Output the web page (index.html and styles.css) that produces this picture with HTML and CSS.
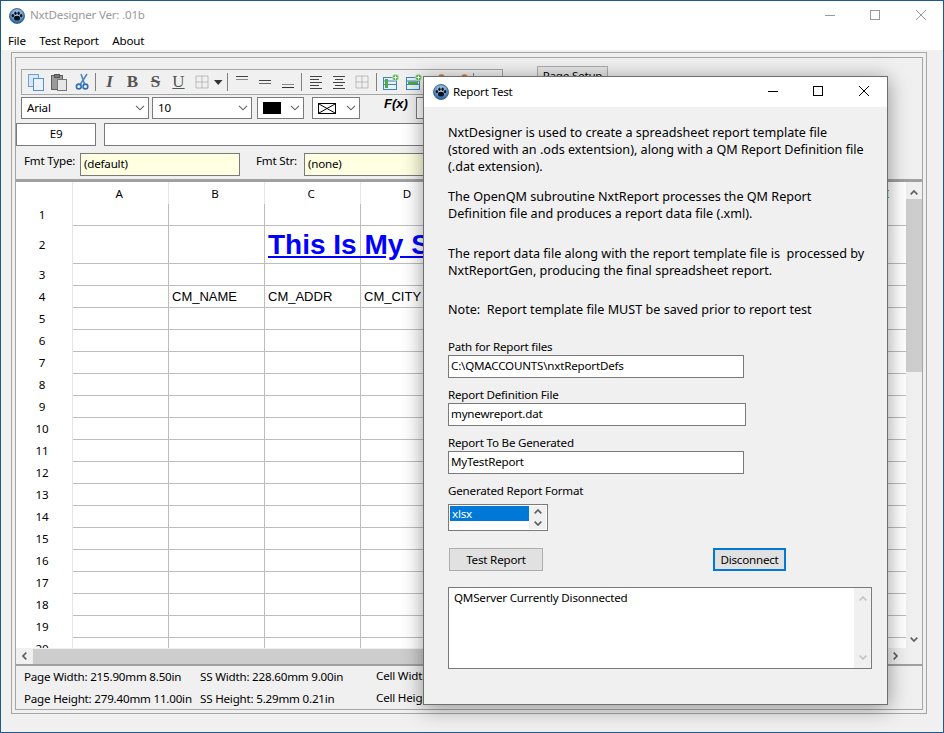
FILE: index.html
```html
<!DOCTYPE html>
<html>
<head>
    <title>NxtDesigner Ver: .01b</title>
    <link rel="stylesheet" href="styles.css">
</head>
<body>
<svg class="defs" width="0" height="0">
    <defs>
        <radialGradient id="ball" cx="50%" cy="35%" r="65%">
            <stop offset="0" stop-color="#c9dcf0"/>
            <stop offset="0.55" stop-color="#6f9fce"/>
            <stop offset="1" stop-color="#1f5a96"/>
        </radialGradient>
        <symbol id="paw" viewBox="0 0 16 16">
            <circle cx="8" cy="8" r="7.5" fill="url(#ball)" stroke="#35577d" stroke-width="0.8"/>
            <ellipse cx="8" cy="10.2" rx="3" ry="2.4" fill="#0b0f18"/>
            <ellipse cx="3.9" cy="7.6" rx="1.2" ry="1.6" fill="#0b0f18"/>
            <ellipse cx="6.5" cy="5.2" rx="1.2" ry="1.7" fill="#0b0f18"/>
            <ellipse cx="9.6" cy="5.2" rx="1.2" ry="1.7" fill="#0b0f18"/>
            <ellipse cx="12.1" cy="7.6" rx="1.2" ry="1.6" fill="#0b0f18"/>
        </symbol>
        <symbol id="chev" viewBox="0 0 10 6">
            <path d="M1 .8l4 4 4-4" fill="none" stroke="#606060" stroke-width="1.1"/>
        </symbol>
        <symbol id="dotted" viewBox="0 0 14 14">
            <path d="M1.5 1h11M1.5 7h11M1.5 13h11M1 1.5v11M7 1.5v11M13 1.5v11" fill="none" stroke="#8a8a8a" stroke-dasharray="1 1"/>
        </symbol>
        <symbol id="sheet" viewBox="0 0 16 16">
            <rect x="0.5" y="3.5" width="13" height="12" fill="#e6f1fa" stroke="#3f86b8"/>
            <path d="M1 7h12M1 10.5h12" stroke="#3f86b8"/>
        </symbol>
    </defs>
</svg>

<div class="window">
    <div class="titlebar">
        <svg class="title-icon"><use href="#paw"/></svg>
        <span class="title-text">NxtDesigner Ver: .01b</span>
        <div class="win-controls">
            <svg width="46" height="30"><path d="M18 14.5h10" stroke="#999"/></svg>
            <svg width="46" height="30"><rect x="17.5" y="9.5" width="9" height="9" fill="none" stroke="#999"/></svg>
            <svg width="46" height="30"><path d="M17 9l10 10M27 9L17 19" stroke="#999"/></svg>
        </div>
    </div>
    <div class="menubar">
        <span>File</span>
        <span>Test Report</span>
        <span>About</span>
    </div>

    <div class="workspace">
        <div class="outer-frame">
            <div class="inner-frame">
                <div class="tool-row row-one">
                    <div class="toolbar">
                        <span class="tb"><svg width="18" height="18"><rect x="1.5" y="1.5" width="10" height="12" fill="#dbe8f8" stroke="#6d9edb"/><rect x="6.5" y="5.5" width="10" height="12" fill="#eaf2fc" stroke="#5a8fd6"/></svg></span>
                        <span class="tb"><svg width="18" height="18"><rect x="1.5" y="2.5" width="11" height="14" fill="#9a9a9a" stroke="#5e5e5e"/><rect x="4.5" y="1.5" width="5" height="3" fill="#777" stroke="#555"/><rect x="7.5" y="6.5" width="9" height="11" fill="#e6e6e6" stroke="#777"/></svg></span>
                        <span class="tb"><svg width="14" height="18"><path d="M12 1L5.5 11M6 1l3.5 10" stroke="#4f86c4" stroke-width="1.6" fill="none"/><circle cx="3.8" cy="13.5" r="2.4" fill="none" stroke="#2f6fb8" stroke-width="1.6"/><circle cx="10.4" cy="13.5" r="2.4" fill="none" stroke="#2f6fb8" stroke-width="1.6"/></svg></span>
                        <span class="tb-sep"></span>
                        <span class="tb glyph glyph-i">I</span>
                        <span class="tb glyph glyph-b">B</span>
                        <span class="tb glyph glyph-s">S</span>
                        <span class="tb glyph glyph-u">U</span>
                        <span class="tb"><svg width="14" height="14"><use href="#dotted"/></svg></span>
                        <span class="tb-drop"><svg width="9" height="5"><path d="M0 0h8.5L4.2 5z" fill="#333"/></svg></span>
                        <span class="tb-sep sep-wide"></span>
                        <span class="tb"><svg width="14" height="18"><path d="M1 3.5h12" stroke="#444"/><path d="M1 6.5h12" stroke="#888"/></svg></span>
                        <span class="tb"><svg width="14" height="18"><path d="M1 7.5h12" stroke="#444"/><path d="M1 10.5h12" stroke="#666"/></svg></span>
                        <span class="tb"><svg width="14" height="18"><path d="M1 11.5h12" stroke="#888"/><path d="M1 14.5h12" stroke="#333"/></svg></span>
                        <span class="tb-sep"></span>
                        <span class="tb"><svg width="14" height="14"><path d="M1 1.5h12M1 4.5h9M1 7.5h12M1 10.5h9M1 13.5h12" stroke="#444"/></svg></span>
                        <span class="tb"><svg width="14" height="14"><path d="M1 1.5h12M3 4.5h8M1 7.5h12M3 10.5h8M1 13.5h12" stroke="#444"/></svg></span>
                        <span class="tb"><svg width="14" height="14"><use href="#dotted"/></svg></span>
                        <span class="tb-sep sep-wide"></span>
                        <span class="tb"><svg width="16" height="16"><use href="#sheet"/><rect x="2" y="5" width="3" height="9" fill="#4fa84a"/><circle cx="12.5" cy="3.5" r="3.2" fill="#55b24f" stroke="#e8f5e6" stroke-width="0.6"/><path d="M10.5 3.5h4M12.5 1.5v4" stroke="#fff"/></svg></span>
                        <span class="tb"><svg width="16" height="16"><use href="#sheet"/><rect x="2" y="7.5" width="10" height="3" fill="#4fa84a"/><circle cx="12.5" cy="3.5" r="3.2" fill="#55b24f" stroke="#e8f5e6" stroke-width="0.6"/><path d="M10.5 3.5h4M12.5 1.5v4" stroke="#fff"/></svg></span>
                        <span class="tb"><svg width="16" height="16"><use href="#sheet"/><circle cx="12.5" cy="3.5" r="3.2" fill="#d9782f"/></svg></span>
                        <span class="tb"><svg width="16" height="16"><use href="#sheet"/><circle cx="12.5" cy="3.5" r="3.2" fill="#d9782f"/></svg></span>
                        <span class="tb-sep"></span>
                    </div>
                    <div class="page-setup">Page Setup</div>
                </div>

                <div class="tool-row row-two">
                    <div class="combo combo-font"><span class="combo-text">Arial</span><svg class="chev"><use href="#chev"/></svg></div>
                    <div class="combo combo-size"><span class="combo-text">10</span><svg class="chev"><use href="#chev"/></svg></div>
                    <div class="combo combo-color"><span class="swatch"></span><svg class="chev"><use href="#chev"/></svg></div>
                    <div class="combo combo-border"><svg width="18" height="11"><rect x="0.5" y="0.5" width="17" height="10" fill="#fff" stroke="#000"/><path d="M1 1l16 9M17 1L1 10" stroke="#000"/></svg><svg class="chev"><use href="#chev"/></svg></div>
                    <span class="fx">F(x)</span>
                    <div class="combo combo-fx"></div>
                </div>

                <div class="tool-row row-three">
                    <div class="cell-ref">E9</div>
                    <div class="formula"></div>
                </div>

                <div class="tool-row row-four">
                    <span class="fmt-label">Fmt Type:</span>
                    <div class="fmt-field fmt-type">(default)</div>
                    <span class="fmt-label fmt-str-label">Fmt Str:</span>
                    <div class="fmt-field fmt-str">(none)</div>
                </div>

                <div class="sheet-pane">
                    <div class="sheet-view">
                        <table class="sheet">
                            <tr class="col-heads"><th></th><th>A</th><th>B</th><th>C</th><th>D</th><th></th><th></th><th></th><th></th><th>I</th></tr>
                            <tr><th>1</th><td></td><td></td><td></td><td></td><td></td><td></td><td></td><td></td><td></td></tr>
                            <tr class="tall"><th>2</th><td></td><td></td><td class="sheet-title">This Is My Spreadsheet</td><td></td><td></td><td></td><td></td><td></td><td></td></tr>
                            <tr><th>3</th><td></td><td></td><td></td><td></td><td></td><td></td><td></td><td></td><td></td></tr>
                            <tr><th>4</th><td></td><td>CM_NAME</td><td>CM_ADDR</td><td>CM_CITY</td><td></td><td></td><td></td><td></td><td></td></tr>
                            <tr><th>5</th><td></td><td></td><td></td><td></td><td></td><td></td><td></td><td></td><td></td></tr>
                            <tr><th>6</th><td></td><td></td><td></td><td></td><td></td><td></td><td></td><td></td><td></td></tr>
                            <tr><th>7</th><td></td><td></td><td></td><td></td><td></td><td></td><td></td><td></td><td></td></tr>
                            <tr><th>8</th><td></td><td></td><td></td><td></td><td></td><td></td><td></td><td></td><td></td></tr>
                            <tr><th>9</th><td></td><td></td><td></td><td></td><td></td><td></td><td></td><td></td><td></td></tr>
                            <tr><th>10</th><td></td><td></td><td></td><td></td><td></td><td></td><td></td><td></td><td></td></tr>
                            <tr><th>11</th><td></td><td></td><td></td><td></td><td></td><td></td><td></td><td></td><td></td></tr>
                            <tr><th>12</th><td></td><td></td><td></td><td></td><td></td><td></td><td></td><td></td><td></td></tr>
                            <tr><th>13</th><td></td><td></td><td></td><td></td><td></td><td></td><td></td><td></td><td></td></tr>
                            <tr><th>14</th><td></td><td></td><td></td><td></td><td></td><td></td><td></td><td></td><td></td></tr>
                            <tr><th>15</th><td></td><td></td><td></td><td></td><td></td><td></td><td></td><td></td><td></td></tr>
                            <tr><th>16</th><td></td><td></td><td></td><td></td><td></td><td></td><td></td><td></td><td></td></tr>
                            <tr><th>17</th><td></td><td></td><td></td><td></td><td></td><td></td><td></td><td></td><td></td></tr>
                            <tr><th>18</th><td></td><td></td><td></td><td></td><td></td><td></td><td></td><td></td><td></td></tr>
                            <tr><th>19</th><td></td><td></td><td></td><td></td><td></td><td></td><td></td><td></td><td></td></tr>
                            <tr><th>20</th><td></td><td></td><td></td><td></td><td></td><td></td><td></td><td></td><td></td></tr>
                        </table>
                    </div>
                    <div class="vscroll">
                        <svg class="arrow" width="8" height="5"><path d="M.7 4.3L4 1l3.3 3.3" fill="none" stroke="#606060" stroke-width="1.7"/></svg>
                        <div class="vthumb"></div>
                        <svg class="arrow arrow-end" width="8" height="5"><path d="M.7.7L4 4 7.3.7" fill="none" stroke="#606060" stroke-width="1.7"/></svg>
                    </div>
                    <div class="hscroll">
                        <svg class="arrow" width="5" height="8"><path d="M4.3.7L1 4l3.3 3.3" fill="none" stroke="#606060" stroke-width="1.7"/></svg>
                        <div class="hthumb"></div>
                        <svg class="arrow arrow-end" width="5" height="8"><path d="M.7.7L4 4 .7 7.3" fill="none" stroke="#606060" stroke-width="1.7"/></svg>
                    </div>
                </div>

                <div class="status">
                    <span>Page Width: 215.90mm 8.50in</span>
                    <span>SS Width: 228.60mm 9.00in</span>
                    <span>Cell Width: 33.87mm 1.33in</span>
                    <span>Page Height: 279.40mm 11.00in</span>
                    <span>SS Height: 5.29mm 0.21in</span>
                    <span>Cell Height: 5.29mm 0.21in</span>
                </div>
            </div>
        </div>
    </div>

    <div class="dialog">
        <div class="dialog-title">
            <svg class="dialog-icon"><use href="#paw"/></svg>
            <span class="title-label">Report Test</span>
            <div class="win-controls">
                <svg width="46" height="30"><path d="M19 14.5h10" stroke="#000"/></svg>
                <svg width="46" height="30"><rect x="18.5" y="9.5" width="9" height="9" fill="none" stroke="#000"/></svg>
                <svg width="46" height="30"><path d="M18 9l10 10M28 9L18 19" stroke="#000"/></svg>
            </div>
        </div>
        <div class="dialog-body">
            <p class="p-intro">NxtDesigner is used to create a spreadsheet report template file<br>(stored with an .ods extentsion), along with a QM Report Definition file<br>(.dat extension).</p>
            <p class="p-second">The OpenQM subroutine NxtReport processes the QM Report<br>Definition file and produces a report data file (.xml).</p>
            <p class="p-third">The report data file along with the report template file is&nbsp; processed by<br>NxtReportGen, producing the final spreadsheet report.</p>
            <p class="p-note">Note:&nbsp; Report template file MUST be saved prior to report test</p>

            <div class="group group-first">
                <label>Path for Report files</label>
                <div class="field">C:\QMACCOUNTS\nxtReportDefs</div>
            </div>
            <div class="group">
                <label>Report Definition File</label>
                <div class="field field-wide">mynewreport.dat</div>
            </div>
            <div class="group">
                <label>Report To Be Generated</label>
                <div class="field">MyTestReport</div>
            </div>
            <div class="group">
                <label>Generated Report Format</label>
                <div class="listbox">
                    <div class="list-items"><div class="list-sel">xlsx</div></div>
                    <div class="spin">
                        <svg width="8" height="5"><path d="M.7 4.3L4 1l3.3 3.3" fill="none" stroke="#606060" stroke-width="1.7"/></svg>
                        <svg width="8" height="5"><path d="M.7.7L4 4 7.3.7" fill="none" stroke="#606060" stroke-width="1.7"/></svg>
                    </div>
                </div>
            </div>

            <div class="buttons">
                <div class="btn btn-test">Test Report</div>
                <div class="btn btn-focus">Disconnect</div>
            </div>

            <div class="log">
                <div class="log-text">QMServer Currently Disonnected</div>
                <div class="log-scroll">
                    <svg width="8" height="5"><path d="M.7 4.3L4 1l3.3 3.3" fill="none" stroke="#c4c4c4" stroke-width="1.7"/></svg>
                    <svg width="8" height="5"><path d="M.7.7L4 4 7.3.7" fill="none" stroke="#c4c4c4" stroke-width="1.7"/></svg>
                </div>
            </div>
        </div>
    </div>
</div>
</body>
</html>
```

FILE: styles.css
```css
* {
    box-sizing: border-box;
}

body {
    margin: 0;
    font-family: "Noto Sans", sans-serif;
    font-size: 11.6px;
    letter-spacing: -0.2px;
    color: #000;
    background-color: #fff;
}

.defs {
    position: absolute;
}

.window {
    position: relative;
    width: 944px;
    height: 733px;
    border: 1px solid #1c5a8c;
    display: flex;
    flex-direction: column;
    overflow: hidden;
    background-color: #fff;
}

/* title + menu */
.titlebar {
    height: 29px;
    display: flex;
    align-items: center;
    flex: none;
}

.title-icon {
    width: 16px;
    height: 16px;
    margin-left: 8px;
    margin-right: 5px;
}

.title-text {
    color: #999;
    margin-bottom: 2px;
}

.win-controls {
    margin-left: auto;
    display: flex;
    height: 30px;
}

.titlebar .win-controls {
    margin-right: -2px;
}

.menubar {
    height: 20px;
    flex: none;
    display: flex;
    align-items: center;
    gap: 13.5px;
    padding-left: 7px;
}

.workspace {
    flex: 1;
    background-color: #f0f0f0;
    padding: 2px 16px 19px 10px;
    display: flex;
}

.outer-frame {
    flex: 1;
    border: 1px solid #a6a6a6;
    padding: 4px 3px 3px 3px;
    display: flex;
}

.inner-frame {
    flex: 1;
    min-width: 0;
    border: 1px solid #a6a6a6;
    display: flex;
    flex-direction: column;
}

/* tool rows */
.tool-row {
    display: flex;
    flex: none;
}

.row-one {
    height: 25px;
    margin-top: 11px;
    padding-left: 5px;
}

.toolbar {
    width: 482px;
    height: 26px;
    border: 1px solid #a6a6a6;
    display: flex;
    align-items: center;
    padding-left: 2px;
    flex: none;
}

.tb {
    width: 23px;
    height: 22px;
    display: flex;
    align-items: center;
    justify-content: center;
    flex: none;
}

.tb-drop {
    width: 11px;
    display: flex;
    justify-content: center;
    flex: none;
}

.tb-sep {
    width: 1px;
    height: 18px;
    margin: 0 2px;
    background-color: #808080;
    flex: none;
}

.sep-wide {
    margin-left: 3px;
}

.glyph {
    font-family: "Liberation Serif", serif;
    font-size: 17px;
    font-weight: bold;
    color: #555;
    letter-spacing: 0;
}

.glyph-i {
    font-style: italic;
}

.glyph-s {
    text-decoration: line-through;
}

.glyph-u {
    text-decoration: underline;
    font-weight: normal;
}

.page-setup {
    width: 71px;
    height: 30px;
    margin-top: -3px;
    margin-left: 34px;
    border: 1px solid #adadad;
    background-color: #e6e6e6;
    text-align: center;
    padding-top: 1px;
    line-height: 16px;
}

.row-two {
    height: 22px;
    margin-top: 3px;
    padding-left: 5px;
}

.combo {
    height: 22px;
    background-color: #fff;
    border: 1px solid #7a7a7a;
    display: flex;
    align-items: center;
    padding-left: 5px;
    flex: none;
}

.combo-text {
    margin-bottom: 2px;
}

.combo-font {
    width: 128px;
    margin-right: 3px;
}

.combo-size {
    width: 100px;
    margin-right: 5px;
}

.combo-color {
    width: 47px;
    margin-right: 8px;
}

.combo-border {
    width: 48px;
}

.combo-fx {
    width: 100px;
    margin-left: 9px;
}

.chev {
    width: 10px;
    height: 6px;
    margin-left: auto;
    margin-right: 3px;
}

.swatch {
    width: 18px;
    height: 12px;
    background-color: #000;
}

.fx {
    margin-left: 24px;
    width: 23px;
    font-family: "Liberation Sans", sans-serif;
    font-size: 13px;
    font-weight: bold;
    font-style: italic;
    letter-spacing: 0;
    line-height: 14px;
    white-space: nowrap;
}

.row-three {
    height: 23px;
    margin-top: 4px;
}

.cell-ref {
    width: 80px;
    height: 23px;
    background-color: #fff;
    border: 1px solid #7a7a7a;
    text-align: center;
    line-height: 20px;
}

.formula {
    width: 520px;
    height: 23px;
    margin-left: 8px;
    background-color: #fff;
    border: 1px solid #7a7a7a;
}

.row-four {
    height: 23px;
    margin-top: 7px;
    align-items: flex-start;
}

.fmt-label {
    margin-left: 8px;
    width: 56px;
    line-height: 16px;
}

.fmt-str-label {
    margin-left: 16px;
    width: 48px;
}

.fmt-field {
    height: 23px;
    background-color: #ffffe1;
    border: 1px solid #7a7a7a;
    padding-left: 3px;
    line-height: 20px;
}

.fmt-type {
    width: 160px;
}

.fmt-str {
    width: 300px;
}

/* spreadsheet */
.sheet-pane {
    flex: 1;
    min-height: 0;
    margin-top: 3px;
    border-top: 3px solid #a0a0a0;
    border-bottom: 2px solid #a0a0a0;
    display: grid;
    grid-template-columns: 890px 16px;
    grid-template-rows: 466px 16px;
    background-color: #f0f0f0;
}

.sheet-view {
    background-color: #fff;
    overflow: hidden;
}

.sheet {
    border-collapse: separate;
    border-spacing: 0;
    table-layout: fixed;
    width: 921px;
}

.sheet th {
    width: 96px;
    height: 22px;
    padding: 0 3px 0 0;
    font-weight: normal;
    border-right: 1px solid #e4e4e4;
}

.sheet th:first-child {
    width: 57px;
}

.sheet tr th:first-child {
    padding-right: 4px;
    padding-bottom: 2px;
}

.sheet td {
    height: 22px;
    padding: 0 0 0 3px;
    border-right: 1px solid #bdbdbd;
    border-bottom: 1px solid #bdbdbd;
    font-family: "Liberation Sans", sans-serif;
    font-size: 13px;
    letter-spacing: 0;
    white-space: nowrap;
}

.sheet .tall th,
.sheet .tall td {
    height: 38px;
}

.sheet td.sheet-title {
    font-size: 28px;
    font-weight: bold;
    color: #0000ff;
    text-decoration: underline;
    overflow: visible;
    max-width: 96px;
}

.vscroll {
    display: flex;
    flex-direction: column;
    align-items: center;
    padding-top: 8px;
    padding-bottom: 6px;
}

.vthumb {
    width: 16px;
    height: 173px;
    margin-top: 4px;
    background-color: #cdcdcd;
}

.vscroll .arrow-end {
    margin-top: auto;
}

.hscroll {
    grid-column: 1;
    display: flex;
    align-items: center;
    padding-left: 6px;
    padding-right: 8px;
}

.hthumb {
    width: 560px;
    height: 15px;
    margin-left: 6px;
    background-color: #cdcdcd;
}

.hscroll .arrow-end {
    margin-left: auto;
}

/* status */
.status {
    height: 43px;
    flex: none;
    display: grid;
    grid-template-columns: 176px 176px 1fr;
    grid-auto-rows: 22px;
    padding-left: 8px;
    align-items: center;
}

.status span {
    margin-top: -2px;
}

.status span:nth-child(3n) {
    margin-top: -4px;
}

/* dialog window */
.dialog {
    position: absolute;
    left: 422px;
    top: 75px;
    width: 465px;
    height: 629px;
    border: 1px solid #6e6e6e;
    background-color: #f0f0f0;
    box-shadow: 0 3px 20px rgba(0, 0, 0, 0.4);
    display: flex;
    flex-direction: column;
}

.dialog-title {
    height: 30px;
    flex: none;
    background-color: #fff;
    display: flex;
    align-items: center;
}

.dialog-icon {
    width: 16px;
    height: 16px;
    margin-left: 9px;
    margin-right: 4px;
}

.title-label {
    margin-bottom: 2px;
}

.dialog-body {
    padding: 17px 0 0 24px;
    flex: 1;
}

.dialog-body p {
    margin: 0;
    font-size: 12.6px;
    letter-spacing: 0;
    line-height: 17px;
}

.dialog-body .p-second {
    margin-top: 13px;
}

.dialog-body .p-third {
    margin-top: 23px;
}

.dialog-body .p-note {
    margin-top: 22px;
}

.group {
    margin-top: 9px;
}

.group-first {
    margin-top: 21px;
}

.group label {
    display: block;
    height: 16px;
    line-height: 16px;
}

.field {
    width: 296px;
    height: 23px;
    background-color: #fff;
    border: 1px solid #7a7a7a;
    padding-left: 2px;
    line-height: 19px;
}

.field-wide {
    width: 298px;
}

.listbox {
    width: 100px;
    height: 27px;
    margin-top: 5px;
    border: 1px solid #7a7a7a;
    background-color: #fff;
    display: flex;
    padding: 1px;
}

.list-items {
    flex: 1;
}

.list-sel {
    width: 79px;
    height: 15px;
    background-color: #0078d7;
    color: #fff;
    line-height: 15px;
    padding-left: 2px;
}

.spin {
    width: 17px;
    background-color: #f0f0f0;
    display: flex;
    flex-direction: column;
    align-items: center;
    justify-content: space-around;
}

.buttons {
    display: flex;
    margin-top: 17px;
    padding-left: 1px;
}

.btn {
    height: 23px;
    background-color: #e1e1e1;
    border: 1px solid #adadad;
    text-align: center;
    line-height: 21px;
}

.btn-test {
    width: 94px;
}

.btn-focus {
    width: 73px;
    margin-left: 170px;
    border: 2px solid #0078d7;
    line-height: 19px;
}

.log {
    width: 424px;
    height: 82px;
    margin-top: 16px;
    background-color: #fff;
    border: 1px solid #7a7a7a;
    display: flex;
}

.log-text {
    flex: 1;
    padding: 2px 0 0 5px;
}

.log-scroll {
    width: 17px;
    background-color: #f0f0f0;
    display: flex;
    flex-direction: column;
    align-items: center;
    justify-content: space-between;
    padding: 8px 0;
}
```
